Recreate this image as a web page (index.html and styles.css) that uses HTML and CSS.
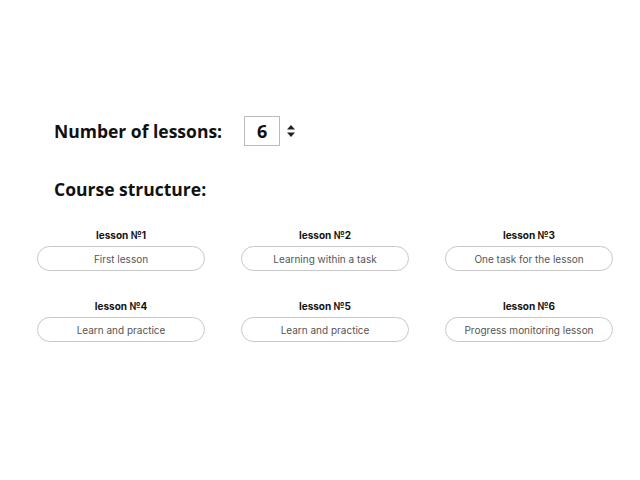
FILE: index.html
```html
<!DOCTYPE html>
<html>
<head>
<meta charset="utf-8">
<link rel="stylesheet" href="styles.css">
</head>
<body>
<div class="page">
  <div class="count-row">
    <span class="heading">Number of lessons:</span>
    <div class="count-box">6</div>
    <svg class="spinner" width="10" height="14" viewBox="0 0 10 14"><path d="M5 1 L9 5.5 L1 5.5 Z" fill="#222"/><path d="M5 13 L9 8.5 L1 8.5 Z" fill="#222"/></svg>
  </div>
  <div class="heading structure">Course structure:</div>
  <div class="grid">
    <div class="lesson"><div class="label">lesson №1</div><div class="pill">First lesson</div></div>
    <div class="lesson"><div class="label">lesson №2</div><div class="pill">Learning within a task</div></div>
    <div class="lesson"><div class="label">lesson №3</div><div class="pill">One task for the lesson</div></div>
    <div class="lesson"><div class="label">lesson №4</div><div class="pill">Learn and practice</div></div>
    <div class="lesson"><div class="label">lesson №5</div><div class="pill">Learn and practice</div></div>
    <div class="lesson"><div class="label">lesson №6</div><div class="pill">Progress monitoring lesson</div></div>
  </div>
</div>
</body>
</html>
```
FILE: styles.css
```css
html, body {
  margin: 0;
  background: #fff;
}
.page {
  padding-top: 116px;
  font-family: "Open Sans", "Noto Sans", sans-serif;
  color: #111;
}
.count-row {
  display: flex;
  align-items: center;
  padding-left: 54px;
  height: 30px;
}
.heading {
  font-size: 17.5px;
  font-weight: 700;
  line-height: 22px;
}
.count-box {
  margin-left: 22px;
  width: 34px;
  height: 28px;
  border: 1px solid #bbb;
  display: flex;
  align-items: center;
  justify-content: center;
  font-size: 18px;
  font-weight: 700;
}
.spinner {
  margin-left: 6px;
}
.structure {
  padding-left: 54px;
  margin-top: 32px;
}
.grid {
  display: grid;
  grid-template-columns: repeat(3, 168px);
  column-gap: 36px;
  row-gap: 28px;
  padding-left: 37px;
  margin-top: 28px;
}
.lesson {
  display: flex;
  flex-direction: column;
  align-items: center;
}
.label {
  font-family: "Inter", sans-serif;
  font-size: 10px;
  font-weight: 700;
  line-height: 14px;
  color: #111;
}
.pill {
  margin-top: 4px;
  box-sizing: border-box;
  width: 168px;
  height: 25px;
  border: 1px solid #c8c8c8;
  border-radius: 13px;
  display: flex;
  align-items: center;
  justify-content: center;
  font-family: "Inter", sans-serif;
  font-size: 10px;
  color: #555;
}
```
